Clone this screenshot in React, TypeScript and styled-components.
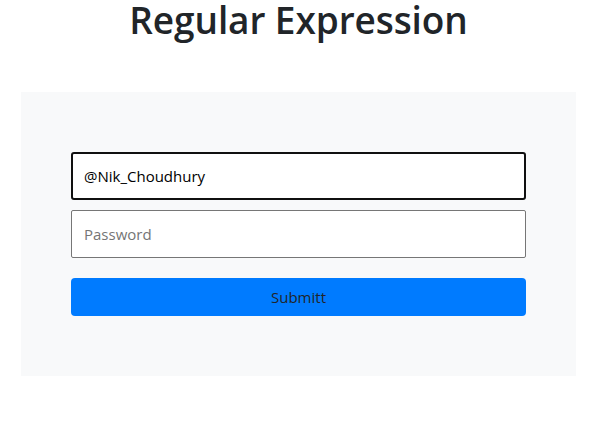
import React, { useEffect, useRef } from "react";
import styled, { createGlobalStyle } from "styled-components";

const Global = createGlobalStyle`
  html, body { margin: 0; padding: 0; background: #fff; }
  body { font-family: "Open Sans", "Noto Sans", sans-serif; color: #212529; }
  * { box-sizing: border-box; }
`;

const Page = styled.div`
  padding: 0 27px 0 21px;
`;

const Title = styled.h1`
  margin: 0 0 52px;
  text-align: center;
  font-family: "Open Sans", sans-serif;
  font-weight: 600;
  font-size: 37px;
  line-height: 40px;
  color: #212529;
  letter-spacing: -0.1px;
`;

const Panel = styled.form`
  background: #f8f9fa;
  padding: 60px 50px;
  display: flex;
  flex-direction: column;
`;

const Field = styled.input<{ $focused?: boolean }>`
  display: block;
  width: 100%;
  height: 48px;
  margin: 0 0 10px;
  padding: 0 12px;
  font-family: "Open Sans", sans-serif;
  font-size: 15px;
  color: #000;
  background: #fff;
  border: ${(p) => (p.$focused ? "2px solid #101010" : "1px solid #767676")};
  padding-left: ${(p) => (p.$focused ? "11px" : "12px")};
  border-radius: ${(p) => (p.$focused ? "3px" : "2px")};
  outline: none;
  caret-color: #000;
  &::placeholder { color: #757575; }
`;

const Submit = styled.button`
  margin-top: 10px;
  height: 38px;
  width: 100%;
  border: none;
  border-radius: 4px;
  background: #007bff;
  color: #212529;
  font-family: "Open Sans", sans-serif;
  font-size: 15px;
  cursor: pointer;
`;

export default function App() {
  const ref = useRef<HTMLInputElement>(null);
  useEffect(() => {
    const el = ref.current;
    if (el) {
      el.focus();
      const n = el.value.length;
      el.setSelectionRange(n, n);
    }
  }, []);
  return (
    <>
      <Global />
      <Page>
        <Title>Regular Expression</Title>
        <Panel onSubmit={(e) => e.preventDefault()}>
          <Field ref={ref} $focused defaultValue="@Nik_Choudhury" />
          <Field type="password" placeholder="Password" />
          <Submit type="submit">Submitt</Submit>
        </Panel>
      </Page>
    </>
  );
}
